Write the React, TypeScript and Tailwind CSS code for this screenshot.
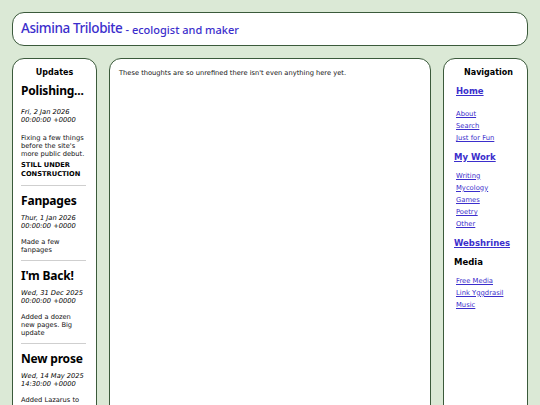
const UPDATES = [
  {
    title: "Polishing...",
    date: ["Fri, 2 Jan 2026", "00:00:00 +0000"],
    body: "Fixing a few things before the site's more public debut.",
    note: "STILL UNDER CONSTRUCTION",
  },
  {
    title: "Fanpages",
    date: ["Thur, 1 Jan 2026", "00:00:00 +0000"],
    body: "Made a few fanpages",
  },
  {
    title: "I'm Back!",
    date: ["Wed, 31 Dec 2025", "00:00:00 +0000"],
    body: "Added a dozen new pages. Big update",
  },
  {
    title: "New prose",
    date: ["Wed, 14 May 2025", "14:30:00 +0000"],
    body: "Added Lazarus to Writing and a few small tweaks.",
  },
];

const NAV = [
  { head: "Home", links: ["About", "Search", "Just for Fun"] },
  { head: "My Work", links: ["Writing", "Mycology", "Games", "Poetry", "Other"] },
  { head: "Webshrines", links: [] },
  { head: "Media", plain: true, links: ["Free Media", "Link Yggdrasil", "Music"] },
];

const box = "bg-white border-[1.5px] border-[#3b5a3b] rounded-[12px]";

function Updates() {
  return (
    <aside className={`${box} w-[85px] shrink-0 pl-[8px] pr-[10px] pt-[9px] pb-6`}>
      <h2 className="text-center text-[8px] font-bold text-black leading-[10px] pl-[2px]">Updates</h2>
      {UPDATES.map((u, i) => (
        <div key={u.title} className={i > 0 ? "border-t border-[#cfcfcf] mt-[6px] pt-[7px]" : "mt-[5px]"}>
          <h3 className="text-[12px] font-['Noto_Sans',sans-serif] font-bold tracking-[-0.2px] leading-[16px] text-black">
            {u.title}
          </h3>
          <p className={`italic text-[6.7px] leading-[8px] text-black ${i === 0 ? "mt-[9px]" : "mt-[5px]"}`}>
            {u.date[0]}
            <br />
            {u.date[1]}
          </p>
          <p className={`text-[6.7px] leading-[8px] text-[#111] ${i === 0 ? "mt-[10px]" : "mt-[8px]"}`}>{u.body}</p>
          {u.note && <p className="text-[6.7px] font-bold leading-[9px] mt-[3px] text-black">{u.note}</p>}
        </div>
      ))}
    </aside>
  );
}

function Navigation() {
  return (
    <nav className={`${box} w-[85px] shrink-0 pl-[10px] pr-2 pt-[9px]`}>
      <h2 className="text-center text-[8px] font-bold text-black leading-[10px] pl-1">Navigation</h2>
      {NAV.map((s, i) => (
        <div key={s.head} className={i === 0 ? "mt-[6px] pl-[2px]" : "mt-[5px]"}>
          {s.plain ? (
            <h3 className="text-[8.5px] font-bold leading-[14px] text-black">{s.head}</h3>
          ) : (
            <a href="#" className="block text-[8.5px] font-bold leading-[14px] text-[#3b2ecc] underline">
              {s.head}
            </a>
          )}
          {s.links.length > 0 && (
            <ul className={i === 0 ? "mt-[10px] pl-0" : "mt-[6px] pl-[2px]"}>
              {s.links.map((l) => (
                <li key={l} className="text-[6.8px] leading-[12.2px]">
                  <a href="#" className="text-[#3b2ecc] underline">
                    {l}
                  </a>
                </li>
              ))}
            </ul>
          )}
        </div>
      ))}
    </nav>
  );
}

export default function App() {
  return (
    <div className="bg-[#dbe9d6] px-3 pt-3 font-['DejaVu_Sans',sans-serif] overflow-hidden h-[405px]">
      <header className={`${box} h-[34px] flex items-center px-2 gap-[3px]`}>
        <h1 className="text-[13.5px] tracking-[-0.4px] font-['Noto_Sans',sans-serif] font-medium text-[#3b2ecc] leading-none">
          Asimina Trilobite
        </h1>
        <span className="text-[11px] font-['Noto_Sans',sans-serif] font-medium text-[#3b2ecc] leading-none mt-[1px]">
          - ecologist and maker
        </span>
      </header>
      <div className="flex gap-3 mt-3 items-stretch">
        <Updates />
        <main className={`${box} flex-1 px-[9px] pt-[10px]`}>
          <p className="text-[6.7px] text-[#111] leading-[9px]">
            These thoughts are so unrefined there isn't even anything here yet.
          </p>
        </main>
        <Navigation />
      </div>
    </div>
  );
}
